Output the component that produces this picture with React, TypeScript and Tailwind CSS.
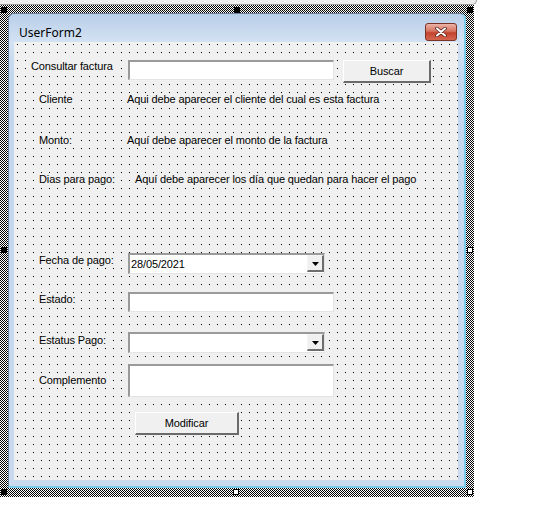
import type { ReactNode } from "react";

const font = "font-['Liberation_Sans',Arial,sans-serif] text-[11px] leading-[13px] tracking-[-0.12px] text-black";

function Caption({ children }: { children: ReactNode }) {
	return <span className="bg-[#f0f0f0] px-[2px] whitespace-nowrap">{children}</span>;
}

function TextBox({ tall }: { tall?: boolean }) {
	return (
		<div
			className={`w-[206px] bg-white border-t-2 border-l-2 border-r border-b border-t-[#9a9a9a] border-l-[#9a9a9a] border-r-[#e4e4e4] border-b-[#e4e4e4] ${tall ? "h-[33px]" : "h-[20px]"}`}
		/>
	);
}

function ComboBox({ value }: { value?: string }) {
	return (
		<div className="flex w-[197px] h-[21px] bg-white border-t-2 border-l-2 border-r border-b border-t-[#9a9a9a] border-l-[#9a9a9a] border-r-[#e4e4e4] border-b-[#e4e4e4]">
			<span className="flex-1 pl-[1px] pt-[3px]">{value}</span>
			<div className="flex w-[17px] h-[17px] items-center justify-center bg-[#f0f0f0] border-t border-l border-t-[#f4f4f4] border-l-[#f4f4f4] border-r-2 border-b-2 border-r-[#6e6e6e] border-b-[#6e6e6e]">
				<svg width="7" height="4" viewBox="0 0 7 4" className="mt-[1px]">
					<polygon points="0,0 7,0 3.5,4" fill="#000" />
				</svg>
			</div>
		</div>
	);
}

function Button({ label, width }: { label: string; width: string }) {
	return (
		<div
			className={`flex h-[23px] items-center justify-center bg-[#f0f0f0] border-t border-l border-t-white border-l-white border-r-2 border-b-2 border-r-[#6b6b6b] border-b-[#6b6b6b] ${width}`}
		>
			<span className="mt-[1px]">{label}</span>
		</div>
	);
}

function Handle({ pos, filled }: { pos: string; filled?: boolean }) {
	return (
		<div
			className={`absolute w-[6px] h-[6px] border border-black ${filled ? "bg-black" : "bg-white"} ${pos}`}
		/>
	);
}

export default function App() {
	return (
		<div className={`w-[537px] h-[512px] bg-white overflow-hidden ${font}`}>
			<div className="w-[477px] h-[5px] bg-[#ececec] border-b border-r border-[#9b9b9b] rounded-br-[6px]" />

			{/* designer selection frame */}
			<div className="relative w-[474px] h-[492px] pt-[8px] pl-[8px] bg-[image:repeating-conic-gradient(#000_0_25%,#fff_0_50%)] bg-[length:2px_2px]">
				<Handle pos="left-[1px] top-[2px]" filled />
				<Handle pos="left-[234px] top-[2px]" filled />
				<Handle pos="left-[467px] top-[2px]" filled />
				<Handle pos="left-[1px] top-[242px]" filled />
				<Handle pos="left-[467px] top-[242px]" />
				<Handle pos="left-[1px] top-[484px]" filled />
				<Handle pos="left-[233px] top-[484px]" />
				<Handle pos="left-[467px] top-[484px]" />

				{/* UserForm window */}
				<div className="flex flex-col w-[458px] h-[475px] rounded-t-[6px] border-t border-l border-r-2 border-b-2 border-t-[#6a819d] border-l-[#6a819d] border-r-[#7ccbe9] border-b-[#7ccbe9] bg-[linear-gradient(to_bottom,#b8cee8,#d3e2f3_28px,#c2d6ed_60px,#c9daee)]">
					<div className="flex h-[28px] shrink-0 items-start justify-between pl-[10px] pr-[7px]">
						<span className="mt-[11px] font-['Noto_Sans',sans-serif] text-[12px] leading-[16px] tracking-normal">UserForm2</span>
						<div className="mt-[9px] flex w-[32px] h-[18px] items-center justify-center rounded-[3px] border border-[#7a3327] bg-[linear-gradient(to_bottom,#eab3a6,#d77361_45%,#c2432d_55%,#d4664f)]">
							<svg width="12" height="10" viewBox="0 0 12 10">
								<path d="M2 1.5 L10 8.5 M10 1.5 L2 8.5" stroke="#5b231b" strokeWidth="3.6" strokeLinecap="round" />
								<path d="M2 1.5 L10 8.5 M10 1.5 L2 8.5" stroke="#fff" strokeWidth="2" strokeLinecap="round" />
							</svg>
						</div>
					</div>

					{/* client area with design grid */}
					<div className="ml-[5px] flex flex-col w-[444px] h-[438px] bg-[#f0f0f0] bg-[image:conic-gradient(from_270deg_at_1px_1px,#000_25%,transparent_0)] bg-[length:8px_8px] bg-[position:3px_2px]">
						<div className="mt-[18px] flex h-[23px] items-start">
							<div className="w-[114px] shrink-0 pl-[15px]">
								<Caption>Consultar factura</Caption>
							</div>
							<TextBox />
							<div className="ml-[9px]">
								<Button label="Buscar" width="w-[88px]" />
							</div>
						</div>

						<div className="mt-[10px] flex h-[13px]">
							<div className="w-[111px] shrink-0 pl-[23px]">
								<Caption>Cliente</Caption>
							</div>
							<Caption>Aqui debe aparecer el cliente del cual es esta factura</Caption>
						</div>

						<div className="mt-[28px] flex h-[13px]">
							<div className="w-[111px] shrink-0 pl-[23px]">
								<Caption>Monto:</Caption>
							</div>
							<Caption>Aquí debe aparecer el monto de la factura</Caption>
						</div>

						<div className="mt-[26px] flex h-[13px]">
							<div className="w-[119px] shrink-0 pl-[23px]">
								<Caption>Dias para pago:</Caption>
							</div>
							<Caption>Aquí debe aparecer los día que quedan para hacer el pago</Caption>
						</div>

						<div className="mt-[67px] flex h-[21px] items-start">
							<div className="w-[114px] shrink-0 pl-[23px] mt-[1px]">
								<Caption>Fecha de pago:</Caption>
							</div>
							<ComboBox value="28/05/2021" />
						</div>

						<div className="mt-[18px] flex h-[20px] items-start">
							<div className="w-[114px] shrink-0 pl-[23px] mt-[1px]">
								<Caption>Estado:</Caption>
							</div>
							<TextBox />
						</div>

						<div className="mt-[20px] flex h-[21px] items-start">
							<div className="w-[114px] shrink-0 pl-[23px] mt-[2px]">
								<Caption>Estatus Pago:</Caption>
							</div>
							<ComboBox />
						</div>

						<div className="mt-[11px] flex h-[33px] items-start">
							<div className="w-[114px] shrink-0 pl-[23px] mt-[10px]">
								<Caption>Complemento</Caption>
							</div>
							<TextBox tall />
						</div>

						<div className="mt-[15px] pl-[121px]">
							<Button label="Modificar" width="w-[104px]" />
						</div>
					</div>
				</div>
			</div>
		</div>
	);
}
